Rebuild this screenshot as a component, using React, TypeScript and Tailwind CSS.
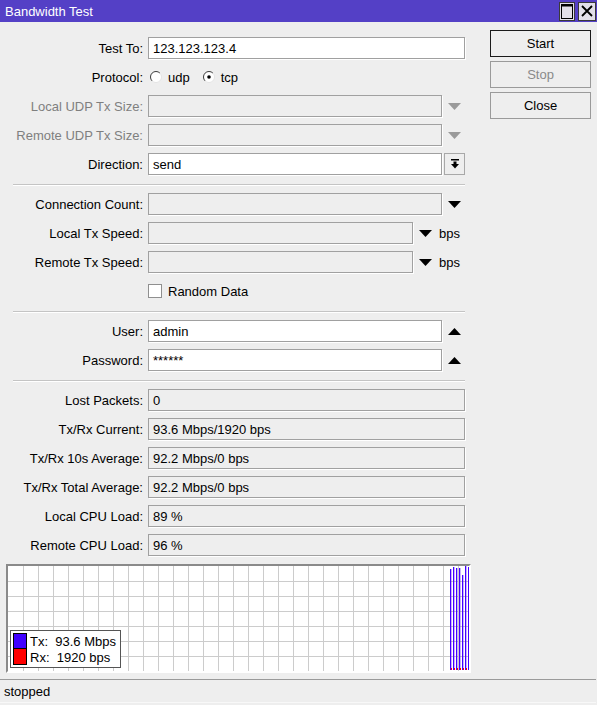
import React from "react";

const DownArrow = ({ color = "#000" }: { color?: string }) => (
  <svg width="13" height="7" viewBox="0 0 13 7" className="shrink-0">
    <polygon points="0,0 13,0 6.5,7" fill={color} />
  </svg>
);

const UpArrow = () => (
  <svg width="13" height="7" viewBox="0 0 13 7" className="shrink-0">
    <polygon points="0,7 13,7 6.5,0" fill="#000" />
  </svg>
);

const Radio = ({ checked }: { checked?: boolean }) => (
  <svg width="12" height="12" viewBox="0 0 12 12" className="shrink-0">
    <circle cx="6" cy="6" r="5.5" fill="#fff" />
    <path d="M2.1 9.9 A5.5 5.5 0 0 1 9.9 2.1" fill="none" stroke="#3c3c3c" strokeWidth="1" />
    <path d="M9.9 2.1 A5.5 5.5 0 0 1 2.1 9.9" fill="none" stroke="#e4e4e4" strokeWidth="1" />
    {checked && <circle cx="6" cy="6" r="1.8" fill="#000" />}
  </svg>
);

function Row({
  label,
  disabled,
  children,
}: {
  label?: string;
  disabled?: boolean;
  children?: React.ReactNode;
}) {
  return (
    <div className="mt-[7px] flex h-[22px] items-center">
      <div
        className={`w-[130px] shrink-0 whitespace-nowrap text-right ${
          disabled ? "text-[#7f7f7f]" : "text-black"
        }`}
      >
        {label}
      </div>
      <div className="ml-[5px] flex h-full flex-1 items-center">{children}</div>
    </div>
  );
}

function Field({
  width,
  value,
  white,
}: {
  width: string;
  value?: string;
  white?: boolean;
}) {
  return (
    <div
      className={`flex h-[22px] shrink-0 items-center border border-[#a0a0a0] pl-[4px] shadow-[1px_1px_0_#ffffff] ${width} ${
        white ? "bg-white" : "bg-[#eeeeee]"
      }`}
    >
      {value}
    </div>
  );
}

function Separator() {
  return <div className="mt-[9px] h-[2px] border-t border-b border-t-[#c4c4c4] border-b-white" />;
}

function TitleBar() {
  return (
    <div className="flex h-[22px] shrink-0 items-center bg-[#5440c6] pl-[5px] pr-[1px]">
      <span className="flex-1 text-white">Bandwidth Test</span>
      <div className="flex h-[19px] w-[16px] items-center justify-center border border-[#3a3a3a] bg-[#e2dfe9]">
        <svg width="12" height="15" viewBox="0 0 12 15">
          <rect x="0.5" y="0.5" width="11" height="14" fill="none" stroke="#000" />
          <rect x="0" y="0" width="12" height="2.5" fill="#000" />
        </svg>
      </div>
      <div className="ml-[3px] flex h-[19px] w-[18px] items-center justify-center border border-[#3a3a3a] bg-[#e2dfe9]">
        <svg width="12" height="12" viewBox="0 0 12 12">
          <path d="M1 1 L11 11 M11 1 L1 11" stroke="#000" strokeWidth="1.8" />
        </svg>
      </div>
    </div>
  );
}

const bars = [3, 1, 2, 2, 9, 0, 1];

function Graph() {
  const vLines = Array.from({ length: 30 }, (_, i) => 15 * (i + 1) + 0.5);
  const hLines = Array.from({ length: 7 }, (_, i) => 15 * (i + 1) + 0.5);
  return (
    <div className="relative ml-[6px] mt-[8px] h-[109px] w-[465px] border-2 border-t-[#8a8a8a] border-l-[#8a8a8a] border-r-white border-b-white bg-white">
      <svg width="461" height="105" viewBox="0 0 461 105" className="block">
        {vLines.map((x) => (
          <line key={"v" + x} x1={x} y1="0" x2={x} y2="105" stroke="#cccccc" strokeWidth="1" />
        ))}
        {hLines.map((y) => (
          <line key={"h" + y} x1="0" y1={y} x2="461" y2={y} stroke="#cccccc" strokeWidth="1" />
        ))}
        {bars.map((top, i) => (
          <g key={i}>
            <rect x={442 + i * 3} y={top} width="1.3" height={104 - top} fill="#4400ff" />
            <rect x={443 + i * 3} y="102" width="1" height="2" fill="#ff0000" />
          </g>
        ))}
      </svg>
      <div className="absolute left-[2px] top-[64px] flex w-[111px] flex-col border border-[#555555] bg-white px-[2px] py-[2px]">
        <div className="flex h-[16px] items-center">
          <div className="h-[16px] w-[14px] border border-black bg-[#4000ff]" />
          <span className="ml-[3px] whitespace-pre">Tx:  93.6 Mbps</span>
        </div>
        <div className="flex h-[16px] items-center">
          <div className="h-[16px] w-[14px] border border-t-0 border-black bg-[#ff0000]" />
          <span className="ml-[3px] whitespace-pre">Rx:  1920 bps</span>
        </div>
      </div>
    </div>
  );
}

function Button({ label, primary, disabled }: { label: string; primary?: boolean; disabled?: boolean }) {
  return (
    <div
      className={`flex h-[27px] items-center justify-center border bg-[#eeeeee] ${
        primary ? "border-[#1a1a1a]" : "border-[#9a9a9a]"
      } ${disabled ? "text-[#8a8a8a]" : "text-black"}`}
    >
      {label}
    </div>
  );
}

export default function App() {
  return (
    <div className="flex h-[705px] w-[597px] flex-col overflow-hidden bg-[#eeeeee] font-['Liberation_Sans',Arial,sans-serif] text-[13px] leading-none text-black">
      <TitleBar />
      <div className="flex">
        <div className="ml-[13px] w-[452px] pt-[8px]">
          <Row label="Test To:">
            <Field width="w-[317px]" white value="123.123.123.4" />
          </Row>
          <Row label="Protocol:">
            <div className="ml-[2px] flex items-center">
              <Radio />
              <span className="ml-[6px]">udp</span>
              <span className="ml-[13px]">
                <Radio checked />
              </span>
              <span className="ml-[6px]">tcp</span>
            </div>
          </Row>
          <Row label="Local UDP Tx Size:" disabled>
            <Field width="w-[294px]" />
            <span className="ml-[6px]">
              <DownArrow color="#9a9a9a" />
            </span>
          </Row>
          <Row label="Remote UDP Tx Size:" disabled>
            <Field width="w-[294px]" />
            <span className="ml-[6px]">
              <DownArrow color="#9a9a9a" />
            </span>
          </Row>
          <Row label="Direction:">
            <Field width="w-[294px]" white value="send" />
            <div className="ml-[2px] flex h-[22px] w-[21px] items-center justify-center border border-[#a8a8a8] bg-[#eeeeee]">
              <svg width="8" height="10" viewBox="0 0 8 10">
                <rect x="0" y="0" width="8" height="1.5" fill="#000" />
                <rect x="2.5" y="2.5" width="3" height="3" fill="#000" />
                <polygon points="0,5 8,5 4,9.5" fill="#000" />
              </svg>
            </div>
          </Row>
          <Separator />
          <Row label="Connection Count:">
            <Field width="w-[294px]" />
            <span className="ml-[6px]">
              <DownArrow />
            </span>
          </Row>
          <Row label="Local Tx Speed:">
            <Field width="w-[265px]" />
            <span className="ml-[6px]">
              <DownArrow />
            </span>
            <span className="ml-[7px]">bps</span>
          </Row>
          <Row label="Remote Tx Speed:">
            <Field width="w-[265px]" />
            <span className="ml-[6px]">
              <DownArrow />
            </span>
            <span className="ml-[7px]">bps</span>
          </Row>
          <Row>
            <div className="h-[14px] w-[14px] border border-[#8f8f8f] bg-white" />
            <span className="ml-[6px]">Random Data</span>
          </Row>
          <Separator />
          <Row label="User:">
            <Field width="w-[294px]" white value="admin" />
            <span className="ml-[6px]">
              <UpArrow />
            </span>
          </Row>
          <Row label="Password:">
            <Field width="w-[294px]" white value="******" />
            <span className="ml-[6px]">
              <UpArrow />
            </span>
          </Row>
          <Separator />
          <Row label="Lost Packets:">
            <Field width="w-[317px]" value="0" />
          </Row>
          <Row label="Tx/Rx Current:">
            <Field width="w-[317px]" value="93.6 Mbps/1920 bps" />
          </Row>
          <Row label="Tx/Rx 10s Average:">
            <Field width="w-[317px]" value="92.2 Mbps/0 bps" />
          </Row>
          <Row label="Tx/Rx Total Average:">
            <Field width="w-[317px]" value="92.2 Mbps/0 bps" />
          </Row>
          <Row label="Local CPU Load:">
            <Field width="w-[317px]" value="89 %" />
          </Row>
          <Row label="Remote CPU Load:">
            <Field width="w-[317px]" value="96 %" />
          </Row>
        </div>
        <div className="ml-[25px] flex w-[101px] flex-col gap-[4px] pt-[8px]">
          <Button label="Start" primary />
          <Button label="Stop" disabled />
          <Button label="Close" />
        </div>
      </div>
      <Graph />
      <div className="mt-[6px] flex h-[24px] w-[596px] items-center border-t border-b border-t-[#9a9a9a] border-b-[#f8f8f8] pl-[4px]">
        stopped
      </div>
    </div>
  );
}
